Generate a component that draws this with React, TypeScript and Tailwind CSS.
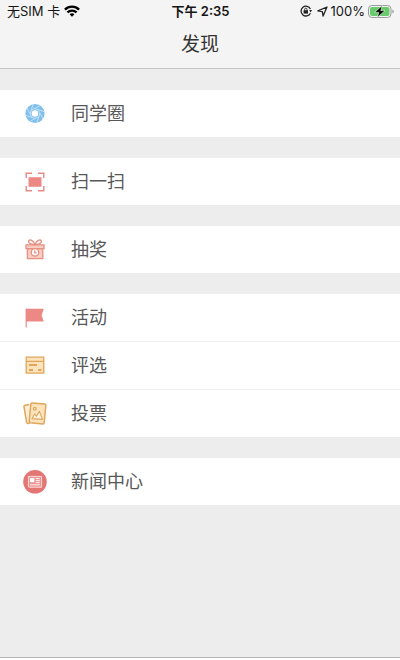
import React from 'react';

const MomentsIcon = () => (
  <svg className="w-6 h-6" viewBox="0 0 24 24">
    <circle cx="12" cy="11.5" r="9.6" fill="#82c0ec" />
    {[0, 45, 90, 135, 180, 225, 270, 315].map((deg) => (
      <path key={deg} d="M8.6 8.6 L17.4 4" stroke="#c4e2f7" strokeWidth="0.9" transform={`translate(0 -0.5) rotate(${deg} 12 12)`} />
    ))}
    <circle cx="12" cy="11.5" r="3.3" fill="#fff" />
  </svg>
);

const ScanIcon = () => (
  <svg className="w-6 h-6" viewBox="0 0 24 24" fill="none" stroke="#e58a86" strokeWidth="1.4">
    <path d="M3.2 8V3.2H9M15 3.2h5.8V8M20.8 16v4.8H15M9 20.8H3.2V16" />
    <path d="M5.5 7.2h13v9.6h-13z" fill="#ed8985" stroke="none" />
  </svg>
);

const GiftIcon = () => (
  <svg className="w-6 h-6" viewBox="0 0 24 24" fill="none" stroke="#e58f80" strokeWidth="1.3">
    <path d="M4.4 10.6h15.4v10H4.4z" fill="#fbcdc2" />
    <path d="M3 6.8h18v3.8H3z" fill="#fbcdc2" />
    <path d="M12 6.6C9 6.6 5 5.4 5.6 3 6.6.6 10.6 2.6 12 6.6ZM12 6.6c3 0 7-1.2 6.4-3.6C17.4.6 13.4 2.6 12 6.6Z" />
    <circle cx="12" cy="14.4" r="3.7" fill="#fff" />
    <path d="M11.8 12.2v2.6h1.8" />
  </svg>
);

const FlagIcon = () => (
  <svg className="w-6 h-6" viewBox="0 0 24 24" fill="#ed8985">
    <path d="M2.6 2.6h1.2v19H2.6z" />
    <path d="M3 2.8h17.8l-2.2 6.4 2.2 6.4H3z" />
  </svg>
);

const SelectIcon = () => (
  <svg className="w-6 h-6" viewBox="0 0 24 24" fill="none" stroke="#dfa65c" strokeWidth="1.3">
    <path d="M3.2 3.2h17.6v16H3.2z" fill="#fce3bb" />
    <path d="M3.2 7.4h17.6" />
    <path d="M6 11h8" strokeWidth="2" />
    <path d="M6 16h4M15 16h3.4" strokeWidth="2.2" />
  </svg>
);

const VoteIcon = () => (
  <svg className="w-6 h-6" viewBox="0 0 24 24" fill="none" stroke="#dfa65c" strokeWidth="1.5" strokeLinejoin="round">
    <path d="M6.4 2.4 2 3.2Q.8 3.6 1 4.8l2.6 15.4q.4 1.4 1.6 1.2l1.6-.2" fill="#fdeed5" />
    <path d="M9.2.9 21.6 2.1q1.4.2 1.2 1.6l-1.6 17q-.2 1.4-1.6 1.2L7.4 20.7q-1.4-.2-1.2-1.6L7.8 2.1Q8 .8 9.2.9Z" fill="#fbe3bd" />
    <circle cx="11.8" cy="6.8" r="1.4" strokeWidth="1.1" />
    <path d="m9 16.6 2.6-4.6 1.8 2.2 3-4.8 3 8Z" fill="#fff4df" strokeWidth="1.1" />
  </svg>
);

const NewsIcon = () => (
  <svg className="w-6 h-6" viewBox="0 0 24 24">
    <circle cx="12" cy="11.8" r="11.8" fill="#e37573" />
    <path d="M5.4 6.4h13.2v10.8h-12q-1.2 0-1.2-1.2Z" fill="#ec9491" stroke="#fbdedc" />
    <path d="M7 8.2h4.4v4H7z" fill="#fff" />
    <path d="M12.8 8.6h4M12.8 10.6h4M12.8 12.6h4M7 14.8h9.8" stroke="#fff" strokeWidth="0.9" />
  </svg>
);

const groups = [
  [{ label: '同学圈', icon: MomentsIcon }],
  [{ label: '扫一扫', icon: ScanIcon }],
  [{ label: '抽奖', icon: GiftIcon }],
  [
    { label: '活动', icon: FlagIcon },
    { label: '评选', icon: SelectIcon },
    { label: '投票', icon: VoteIcon },
  ],
  [{ label: '新闻中心', icon: NewsIcon }],
];

const StatusBar = () => (
  <div className="grid grid-cols-3 items-center h-[22px] pl-[7px] pr-[6px] text-[13px] leading-[22px] text-[#151515]">
    <div className="flex items-center gap-1 whitespace-nowrap">
      <span>无SIM 卡</span>
      <svg className="w-4 h-3" viewBox="0 0 16 12" fill="none" stroke="#000" strokeWidth="2.2">
        <path d="M.9 4.6a10.2 10.2 0 0 1 14.2 0M3.4 7.4a6.6 6.6 0 0 1 9.2 0" />
        <path d="M5.6 9.2a3.6 3.6 0 0 1 4.8 0L8 11.8z" fill="#000" stroke="none" />
      </svg>
    </div>
    <span className="text-center font-semibold">下午 2:35</span>
    <div className="flex items-center justify-end gap-[3px]">
      <svg className="w-3 h-3 mr-[2px]" viewBox="0 0 12 12" fill="none" stroke="#222" strokeWidth="1.3">
        <path d="M10.4 4A4.9 4.9 0 1 0 10.4 8.2" />
        <path d="M9.2 5h2.8l-1.4 2.4z" fill="#222" stroke="none" />
        <path d="M3.6 5.2h4.4v3.4H3.6z" fill="#222" stroke="none" />
        <path d="M4.6 5.6V4.4a1.2 1.2 0 0 1 2.4 0v1.2" strokeWidth="0.9" />
      </svg>
      <svg className="w-[11px] h-[11px]" viewBox="0 0 11 11" fill="none" stroke="#222" strokeWidth="1.3" strokeLinejoin="round">
        <path d="M10 1 .9 4.9l4.4.7.8 4.5z" />
      </svg>
      <span>100%</span>
      <svg className="w-[26px] h-[13px]" viewBox="0 0 26 13">
        <rect x=".5" y=".5" width="22.5" height="12" rx="3.4" fill="#f4f4f4" stroke="#999" />
        <rect x="2" y="2" width="19.5" height="9" rx="2" fill="#68cb6c" />
        <path d="M24.4 4.4q1.4.6 1.4 2.1t-1.4 2.1z" fill="#999" />
        <path d="M14.2.6 6.6 7.4h4.2L9.4 12.4l7.6-6.8h-4.2z" fill="#000" stroke="#f0fff0" strokeWidth="0.6" />
      </svg>
    </div>
  </div>
);

const App = () => {
  return (
    <div className="min-h-screen flex flex-col bg-[#ededed] font-[Inter,'Noto_Sans_CJK_SC',sans-serif]">
      <header className="bg-[#f4f4f4] border-b border-[#c4c4c4]">
        <StatusBar />
        <h1 className="text-center text-[19px] leading-[46px] text-[#333]">发现</h1>
      </header>

      <main className="flex-1 flex flex-col gap-[21px] py-[21px]">
        {groups.map((items) => (
          <ul key={items[0].label} className="bg-white divide-y divide-[#f0f0f0]">
            {items.map(({ label, icon: Icon }) => (
              <li key={label}>
                <button className="flex items-center w-full h-[47px] gap-6 px-[23px] text-left text-lg text-[#585858]">
                  <Icon />
                  <span>{label}</span>
                </button>
              </li>
            ))}
          </ul>
        ))}
      </main>

      <footer className="h-[3px] bg-white border-t border-[#b4b4b4]" />
    </div>
  );
};

export default App;
